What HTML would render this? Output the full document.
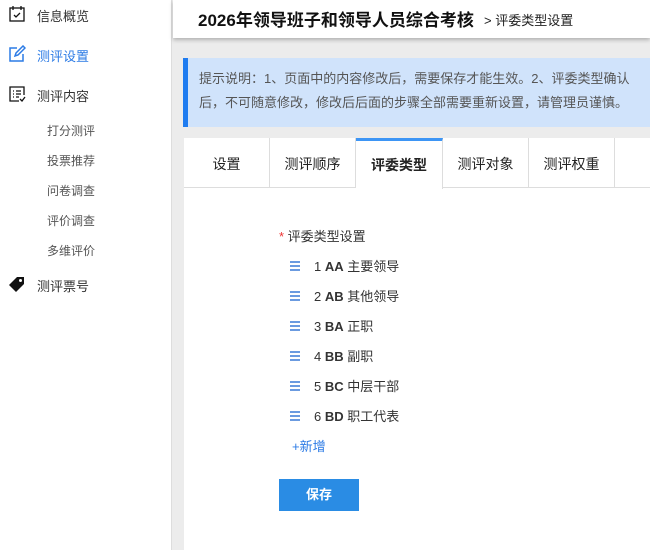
<!DOCTYPE html>
<html><head><meta charset="utf-8"><style>
*{margin:0;padding:0;box-sizing:border-box}
body{width:650px;height:550px;overflow:hidden;background:#ececec;font-family:"Liberation Sans","Noto Sans CJK SC",sans-serif;position:relative;color:#333}
.side{position:absolute;left:0;top:0;width:172px;height:550px;background:#fff;border-right:1px solid #ddd}
.it{position:absolute;left:37px;font-size:13px;color:#333}
.ic{position:absolute;left:8px}
.sub{position:absolute;left:47px;font-size:12px;color:#555}
.hdr{position:absolute;left:173px;top:0;width:477px;height:38px;background:#fff;box-shadow:0 2px 4px rgba(0,0,0,.25)}
.hdr b{position:absolute;left:25px;top:6px;font-size:17px;color:#111}
.hdr span{position:absolute;left:311px;top:10px;font-size:13px;color:#222}
.note{position:absolute;left:183px;top:58px;width:467px;height:69px;background:#d0e3fb;border-left:5px solid #1f7cf0;font-size:13px;color:#555;line-height:24px;padding:9px 0 0 11px}
.panel{position:absolute;left:184px;top:138px;width:466px;height:412px;background:#fff}
.tabs{position:absolute;left:0;top:0;height:50px;width:466px;border-bottom:1px solid #ddd}
.tab{position:absolute;top:0;height:50px;border-right:1px solid #ddd;font-size:14px;text-align:center;line-height:52px;color:#222}
.tab.a{border-top:3px solid #3d95f5;height:51px;background:#fff;line-height:48px;font-weight:bold}
.row{position:absolute;left:106px;font-size:13px;color:#333}
.ham{position:absolute;left:106px;width:10px}
.ham i{display:block;height:2px;background:#6b9be0;margin-bottom:2px}
.btn{position:absolute;left:95px;top:341px;width:80px;height:32px;background:#2a8ce4;color:#fff;font-weight:bold;font-size:13px;text-align:center;line-height:32px}
</style></head><body>
<div class="side">
<svg class="ic" style="top:5px" width="18" height="18" viewBox="0 0 18 18" fill="none" stroke="#111" stroke-width="1.3"><rect x="2" y="3" width="14" height="13"/><path d="M5 1v4M13 1v4M6 10l2 2 4-4"/></svg>
<div class="it" style="top:6px">信息概览</div>
<svg class="ic" style="top:45px" width="18" height="18" viewBox="0 0 18 18" fill="none" stroke="#2c7be5" stroke-width="1.5"><path d="M9 3H2v13h13V9"/><path d="M7 11l1-3 7-7 2 2-7 7z"/></svg>
<div class="it" style="top:46px;color:#2c7be5">测评设置</div>
<svg class="ic" style="top:85px" width="18" height="18" viewBox="0 0 18 18" fill="none" stroke="#111" stroke-width="1.3"><path d="M16 10V2H2v14h9"/><path d="M5 6h1M8 6h5M5 9h1M8 9h5M5 12h1M8 12h3M12 14l2 2 3-4"/></svg>
<div class="it" style="top:86px">测评内容</div>
<div class="sub" style="top:122px">打分测评</div>
<div class="sub" style="top:152px">投票推荐</div>
<div class="sub" style="top:182px">问卷调查</div>
<div class="sub" style="top:212px">评价调查</div>
<div class="sub" style="top:242px">多维评价</div>
<svg class="ic" style="top:275px" width="18" height="18" viewBox="0 0 18 18"><path d="M1 10L9 2h7v7l-8 8z" fill="#111"/><circle cx="12.5" cy="5.5" r="1.5" fill="#fff"/></svg>
<div class="it" style="top:276px">测评票号</div>
</div>
<div class="hdr"><b>2026年领导班子和领导人员综合考核</b><span>&gt; 评委类型设置</span></div>
<div class="note">提示说明：1、页面中的内容修改后，需要保存才能生效。2、评委类型确认<br>后，不可随意修改，修改后后面的步骤全部需要重新设置，请管理员谨慎。</div>
<div class="panel">
<div class="tabs">
<div class="tab" style="left:0;width:86px">设置</div>
<div class="tab" style="left:86px;width:86px">测评顺序</div>
<div class="tab a" style="left:172px;width:87px">评委类型</div>
<div class="tab" style="left:259px;width:86px">测评对象</div>
<div class="tab" style="left:345px;width:86px">测评权重</div>
</div>
<div class="row" style="left:95px;top:88px"><span style="color:#e33">*</span> 评委类型设置</div>
<div class="ham" style="top:123px"><i></i><i></i><i></i></div><div class="row" style="left:130px;top:118px">1 <b>AA</b> 主要领导</div>
<div class="ham" style="top:153px"><i></i><i></i><i></i></div><div class="row" style="left:130px;top:148px">2 <b>AB</b> 其他领导</div>
<div class="ham" style="top:183px"><i></i><i></i><i></i></div><div class="row" style="left:130px;top:178px">3 <b>BA</b> 正职</div>
<div class="ham" style="top:213px"><i></i><i></i><i></i></div><div class="row" style="left:130px;top:208px">4 <b>BB</b> 副职</div>
<div class="ham" style="top:243px"><i></i><i></i><i></i></div><div class="row" style="left:130px;top:238px">5 <b>BC</b> 中层干部</div>
<div class="ham" style="top:273px"><i></i><i></i><i></i></div><div class="row" style="left:130px;top:268px">6 <b>BD</b> 职工代表</div>
<div class="row" style="left:108px;top:298px;color:#2c7be5">+新增</div>
<div class="btn">保存</div>
</div>
</body></html>
